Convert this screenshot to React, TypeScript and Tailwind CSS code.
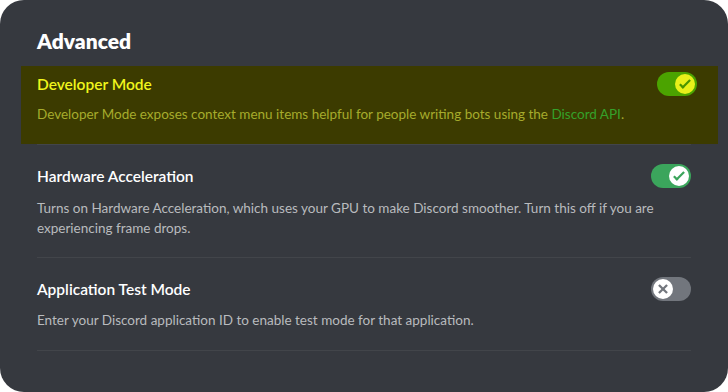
import React from "react";

const CheckIcon = ({ color }: { color: string }) => (
  <svg viewBox="0 0 20 20" width="20" height="20" aria-hidden>
    <path fill={color} d="M7.89561 14.8538L6.30462 13.2629L14.3099 5.25755L15.9009 6.84854L7.89561 14.8538Z" />
    <path fill={color} d="M4.08643 11.0903L5.67742 9.49929L9.4485 13.2704L7.85751 14.8614L4.08643 11.0903Z" />
  </svg>
);

const XIcon = ({ color }: { color: string }) => (
  <svg viewBox="0 0 20 20" width="20" height="20" aria-hidden>
    <path fill={color} d="M5.13231 6.72963L6.7233 5.13864L14.855 13.2704L13.264 14.8614L5.13231 6.72963Z" />
    <path fill={color} d="M13.2704 5.13864L14.8614 6.72963L6.72963 14.8614L5.13864 13.2704L13.2704 5.13864Z" />
  </svg>
);

export default function App() {
  return (
    <div className="w-[728px] h-[392px] bg-white" style={{ fontFamily: 'Lato, "Noto Sans", sans-serif' }}>
      <div className="w-[728px] h-[392px] bg-[#36393f] rounded-[24px] overflow-hidden pt-[27px]">
        <h2 className="pl-[37px] text-[21px] leading-[28px] font-extrabold text-white">Advanced</h2>

        {/* Developer Mode (highlighted) */}
        <div className="mt-[11px] ml-[21px] w-[697px] bg-[#3c3b00] pl-[16px] pr-[21px] pt-[6px] pb-[20px]">
          <div className="flex items-center justify-between h-[24px]">
            <span className="text-[15.5px] leading-[24px] font-semibold text-[#f0f51c]">Developer Mode</span>
            <div className="w-[40px] h-[24px] rounded-full bg-[#4ba300] flex items-center justify-end pr-[2px]">
              <div className="w-[20px] h-[20px] rounded-full bg-[#e8f01a] flex items-center justify-center">
                <CheckIcon color="#4a9400" />
              </div>
            </div>
          </div>
          <p className="mt-[8px] text-[13.5px] leading-[20px] text-[#a6ab2c]">
            Developer Mode exposes context menu items helpful for people writing bots using the{" "}
            <span className="text-[#35a12a]">Discord API</span>.
          </p>
        </div>

        <div className="mx-[37px] border-t border-[#42454a]" />

        {/* Hardware Acceleration */}
        <div className="mx-[37px] pt-[19px] pb-[19px] border-b border-[#42454a]">
          <div className="flex items-center justify-between h-[24px]">
            <span className="text-[15.5px] leading-[24px] font-semibold text-white">Hardware Acceleration</span>
            <div className="w-[40px] h-[24px] rounded-full bg-[#3ba55c] flex items-center justify-end pr-[2px]">
              <div className="w-[20px] h-[20px] rounded-full bg-white flex items-center justify-center">
                <CheckIcon color="#3ba55c" />
              </div>
            </div>
          </div>
          <p className="mt-[10px] text-[13.5px] leading-[20px] text-[#b9bbbe]">
            Turns on Hardware Acceleration, which uses your GPU to make Discord smoother. Turn this off if you are experiencing frame drops.
          </p>
        </div>

        {/* Application Test Mode */}
        <div className="mx-[37px] pt-[19px] pb-[20px] border-b border-[#42454a]">
          <div className="flex items-center justify-between h-[24px]">
            <span className="text-[15.5px] leading-[24px] font-semibold text-white">Application Test Mode</span>
            <div className="w-[40px] h-[24px] rounded-full bg-[#72767d] flex items-center justify-start pl-[2px]">
              <div className="w-[20px] h-[20px] rounded-full bg-white flex items-center justify-center">
                <XIcon color="#72767d" />
              </div>
            </div>
          </div>
          <p className="mt-[9px] text-[13.5px] leading-[20px] text-[#b9bbbe]">
            Enter your Discord application ID to enable test mode for that application.
          </p>
        </div>
      </div>
    </div>
  );
}
